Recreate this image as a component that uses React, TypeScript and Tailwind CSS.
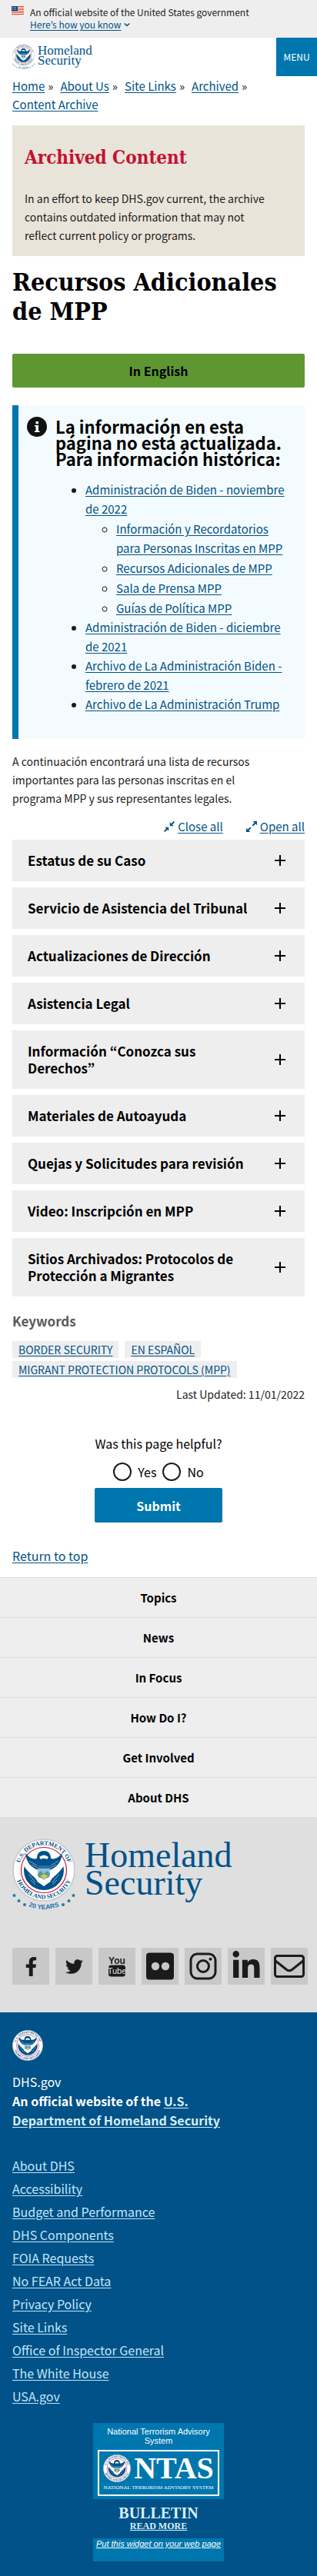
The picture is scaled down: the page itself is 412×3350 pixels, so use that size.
import React, { useId } from "react";
import { FaFacebookF, FaTwitter, FaLinkedinIn } from "react-icons/fa";

const LINK = "text-[#005288] underline underline-offset-2";

function Seal({ className, years = false }: { className: string; years?: boolean }) {
  const id = useId();
  return (
    <svg className={className} viewBox={years ? "0 0 82 98" : "0 0 82 82"} role="img" aria-label="U.S. Department of Homeland Security seal">
      <defs>
        <path id={id + "t"} d="M8.5 41 A32.5 32.5 0 0 1 73.5 41" />
        <path id={id + "b"} d="M3.5 41 A37.5 37.5 0 0 0 78.5 41" />
        <path id={id + "y"} d="M-10 41 A51 51 0 0 0 92 41" />
      </defs>
      <circle cx="41" cy="41" r="40" fill="#fff" stroke="#c4c8d0" strokeWidth="1.6" />
      <g fill="#005288" fontFamily="Liberation Serif, serif" fontWeight="700" fontSize="7.8" textAnchor="middle">
        <text>
          <textPath href={"#" + id + "t"} startOffset="50%">U.S. DEPARTMENT OF</textPath>
        </text>
        <text>
          <textPath href={"#" + id + "b"} startOffset="50%">HOMELAND SECURITY</textPath>
        </text>
      </g>
      <circle cx="41" cy="41" r="29.5" fill="#fff" stroke="#c41230" strokeWidth="1.2" />
      <path d="M15.5 36 C21 45 29 49 34 57 L41 62 L48 57 C53 49 61 45 66.500 36 A26 26 0 1 1 15.500 36Z" fill="#005288" />
      <path d="M17 19 C18 31 25 38 34 41 L34 46 L48 46 L48 41 C57 38 64 31 65 19 C60 25 54 28 50 25.500 C50 19 46 16 41 16 C36 16 32 19 32 25.500 C28 28 22 25 17 19Z" fill="#005288" />
      <path d="M35 24 Q41 19 47 24 L45 27 Q41 24.500 37 27 Z" fill="#fff" />
      <path d="M22 29 L32 35 M25 34 L33 38 M60 29 L50 35 M57 34 L49 38" stroke="#7fa8c6" strokeWidth="1" />
      <path d="M33 35 H49 V46 Q49 53 41 57 Q33 53 33 46Z" fill="#8fc0e0" />
      <path d="M33 35 H49 V39 H33Z" fill="#2b6ea3" />
      <path d="M33 46 L37 42 L41 46 L45 42 L49 46 Q48 50 46 51 H36 Q33 50 33 46Z" fill="#5b9a8c" />
      <path d="M36 49 L41 46 L47 49 L41 52Z" fill="#d9c25f" />
      <path d="M31 50 Q36 50 41 54 Q46 50 51 50 L49 57 L45 56 L41 60 L37 56 L33 57Z" fill="#fff" />
      <path d="M21 46 L30 57 M61 46 L52 57 M24 54 L30 60 M58 54 L52 60" stroke="#7fa8c6" strokeWidth="1" />
      {years && (
        <g>
          <g fill="#1f7f9c">
            <circle cx="2.500" cy="74" r="2" />
            <circle cx="8.500" cy="81" r="2" />
            <circle cx="16" cy="86" r="2" />
            <circle cx="66" cy="86" r="2" />
            <circle cx="73.500" cy="81" r="2" />
            <circle cx="79.500" cy="74" r="2" />
          </g>
          <text fill="#1f6fae" fontFamily="Liberation Sans, sans-serif" fontWeight="700" fontSize="8.5" textAnchor="middle">
            <textPath href={"#" + id + "y"} startOffset="50%">20 YEARS</textPath>
          </text>
        </g>
      )}
    </svg>
  );
}

function Banner() {
  return (
    <div className="flex items-start gap-2 bg-[#eeeeee] pt-2 pr-4 pb-[9px] pl-[15px]">
      <svg className="h-[11px] w-4 shrink-0" viewBox="0 0 16 11" aria-hidden="true">
        <rect width="16" height="11" fill="#fff" />
        <path d="M0 .5H16M0 2.500H16M0 4.500H16M0 6.500H16M0 8.500H16M0 10.500H16" stroke="#db3e1f" />
        <rect width="8" height="6" fill="#0b3d8c" />
        <path d="M1 1.500H7M1 3H7M1 4.500H7" stroke="#fff" strokeWidth=".7" strokeDasharray="1 1" />
      </svg>
      <div className="text-[12px] leading-4">
        <p>An official website of the United States government</p>
        <button type="button" className="flex items-center gap-1 text-[#005288]">
          <span className="underline underline-offset-2">Here’s how you know</span>
          <svg className="h-2 w-2" viewBox="0 0 8 8" fill="none" stroke="currentColor" strokeWidth="1.6" aria-hidden="true">
            <path d="M.8 2.500 4 5.500 7.200 2.500" />
          </svg>
        </button>
      </div>
    </div>
  );
}

function Header() {
  return (
    <header className="flex h-[50px] items-stretch justify-between pl-4">
      <a href="#home" className="flex items-start gap-1 pt-2 font-['Liberation_Serif',serif] text-[17px] leading-[13px] text-[#005288]">
        <Seal years className="h-[35px] w-[29px]" />
        <span className="pt-[2px]">
          Homeland
          <br />
          Security
        </span>
      </a>
      <button type="button" className="w-[53px] bg-[#0076ae] text-[12px] text-white">
        MENU
      </button>
    </header>
  );
}

const crumbs = ["Home", "About Us", "Site Links", "Archived", "Content Archive"];

function Breadcrumb() {
  return (
    <nav aria-label="Breadcrumb" className="px-4 pt-px text-[15px] leading-6">
      <ol className="flex flex-wrap gap-x-[9px]">
        {crumbs.map((c, i) => (
          <li key={c} className="flex gap-1">
            <a href="#crumb" className={LINK}>
              {c}
            </a>
            {i < crumbs.length - 1 && <span>»</span>}
          </li>
        ))}
      </ol>
    </nav>
  );
}

const biden2022 = [
  "Información y Recordatorios para Personas Inscritas en MPP",
  "Recursos Adicionales de MPP",
  "Sala de Prensa MPP",
  "Guías de Política MPP",
];
const archives = [
  "Administración de Biden - diciembre de 2021",
  "Archivo de La Administración Biden - febrero de 2021",
  "Archivo de La Administración Trump",
];

function ArchiveNotice() {
  return (
    <section className="mt-[23px] flex gap-[11px] border-l-8 border-[#0076ae] bg-[#f4fbfe] pt-[15px] pr-4 pb-[33px] pl-[11px]">
      <svg className="h-[26px] w-[26px] shrink-0" viewBox="0 0 26 26" aria-hidden="true">
        <circle cx="13" cy="13" r="13" fill="#111" />
        <path d="M11.500 6h3.500v3.300h-3.500zM10 11h5v7.500h1.500V20H10v-1.500h1.500v-6H10z" fill="#fff" />
      </svg>
      <div>
        <h3 className="pt-[2px] text-[22px] leading-[21px] font-bold text-black">La información en esta página no está actualizada. Para información histórica:</h3>
        <ul className="mt-[17px] list-disc pl-[39px] text-[15px] leading-[25px]">
          <li>
            <a href="#nov-2022" className={LINK}>
              Administración de Biden - noviembre de 2022
            </a>
            <ul className="mt-px list-[circle] space-y-px pl-10">
              {biden2022.map((t) => (
                <li key={t}>
                  <a href="#mpp" className={LINK}>
                    {t}
                  </a>
                </li>
              ))}
            </ul>
          </li>
          {archives.map((t) => (
            <li key={t}>
              <a href="#archive" className={LINK}>
                {t}
              </a>
            </li>
          ))}
        </ul>
      </div>
    </section>
  );
}

const sections = [
  "Estatus de su Caso",
  "Servicio de Asistencia del Tribunal",
  "Actualizaciones de Dirección",
  "Asistencia Legal",
  "Información “Conozca sus Derechos”",
  "Materiales de Autoayuda",
  "Quejas y Solicitudes para revisión",
  "Video: Inscripción en MPP",
  "Sitios Archivados: Protocolos de Protección a Migrantes",
];

function Accordion() {
  return (
    <>
      <div className="mt-[13px] flex justify-end gap-[30px] text-[15px] leading-6 text-[#005288]">
        <button type="button" className="flex items-center gap-1">
          <svg className="h-[14px] w-[14px]" viewBox="0 0 14 14" fill="currentColor" aria-hidden="true">
            <path d="M7.800 1.300v5h5l-1.900-1.900L14 1.300 12.700 0 9.600 3.100zM6.200 12.700v-5h-5l1.900 1.900L0 12.700 1.300 14l3.100-3.100z" />
          </svg>
          <span className="underline underline-offset-2">Close all</span>
        </button>
        <button type="button" className="flex items-center gap-1">
          <svg className="h-[14px] w-[14px]" viewBox="0 0 14 14" fill="currentColor" aria-hidden="true">
            <path d="M14 0v5.200l-1.900-1.900-3.100 3.100L7.600 5l3.100-3.100L8.800 0zM0 14V8.800l1.900 1.900L5 7.600 6.400 9l-3.100 3.100L5.200 14z" />
          </svg>
          <span className="underline underline-offset-2">Open all</span>
        </button>
      </div>
      <div className="mt-[5px] flex flex-col gap-2">
        {sections.map((s) => (
          <h4 key={s}>
            <button type="button" aria-expanded="false" className="flex w-full items-center justify-between gap-5 bg-[#eeeeee] py-4 pr-[25px] pl-5 text-left text-[17px] leading-[22px] font-bold text-black">
              <span>{s}</span>
              <svg className="h-[14px] w-[14px] shrink-0" viewBox="0 0 14 14" stroke="currentColor" strokeWidth="2" aria-hidden="true">
                <path d="M7 0V14M0 7H14" />
              </svg>
            </button>
          </h4>
        ))}
      </div>
    </>
  );
}

const keywords = ["BORDER SECURITY", "EN ESPAÑOL", "MIGRANT PROTECTION PROTOCOLS (MPP)"];

function Feedback() {
  return (
    <form className="mt-10 flex flex-col items-center text-[16px] leading-6 text-black" onSubmit={(e) => e.preventDefault()}>
      <p>Was this page helpful?</p>
      <div className="mt-[13px] flex gap-2">
        {["Yes", "No"].map((o) => (
          <label key={o} className="flex items-center gap-2">
            <input type="radio" name="helpful" className="h-6 w-6 appearance-none rounded-full border-2 border-[#1b1b1b] bg-white checked:bg-[#0076ae]" />
            {o}
          </label>
        ))}
      </div>
      <button type="submit" className="mt-[9px] h-[45px] w-[166px] rounded-xs bg-[#0076ae] font-bold text-white">
        Submit
      </button>
    </form>
  );
}

const navItems = ["Topics", "News", "In Focus", "How Do I?", "Get Involved", "About DHS"];

function Social() {
  const tile = "flex h-12 w-12 items-center justify-center bg-[#c8c8c8] text-[#1b1b1b]";
  return (
    <div className="mt-11 -mr-1 flex justify-between">
      <a href="#facebook" aria-label="Facebook" className={tile}>
        <FaFacebookF size={25} />
      </a>
      <a href="#twitter" aria-label="Twitter" className={tile}>
        <FaTwitter size={23} />
      </a>
      <a href="#youtube" aria-label="YouTube" className={tile}>
        <svg className="h-7 w-6" viewBox="0 0 24 28" fontFamily="Liberation Sans Narrow, Liberation Sans, sans-serif" textAnchor="middle" aria-hidden="true">
          <text x="12" y="10.500" fontSize="12" fontWeight="700" fill="currentColor">
            You
          </text>
          <rect x="1" y="12.500" width="22" height="15" rx="3.500" fill="currentColor" />
          <text x="12" y="24" fontSize="11" fill="#e4e4e4">
            Tube
          </text>
        </svg>
      </a>
      <a href="#flickr" aria-label="Flickr" className={tile}>
        <svg className="h-9 w-9" viewBox="0 0 36 36" aria-hidden="true">
          <rect y=".5" width="36" height="35" rx="4" fill="currentColor" />
          <circle cx="12" cy="18" r="5.200" fill="#c8c8c8" />
          <circle cx="25" cy="18" r="5.200" fill="#c8c8c8" />
        </svg>
      </a>
      <a href="#instagram" aria-label="Instagram" className={tile}>
        <svg className="h-9 w-9" viewBox="0 0 36 36" fill="none" stroke="currentColor" strokeWidth="3" aria-hidden="true">
          <rect x="2" y="2" width="32" height="32" rx="8.500" />
          <circle cx="18" cy="18" r="7.500" />
          <circle cx="27.500" cy="8.800" r="2" fill="currentColor" stroke="none" />
        </svg>
      </a>
      <a href="#linkedin" aria-label="LinkedIn" className={tile}>
        <FaLinkedinIn size={40} />
      </a>
      <a href="#email" aria-label="Email" className={tile}>
        <svg className="h-[30px] w-10" viewBox="0 0 40 30" fill="none" stroke="currentColor" strokeWidth="3" aria-hidden="true">
          <rect x="1.500" y="1.500" width="37" height="27" rx="3" />
          <path d="M2 8 L16.500 19.500 Q20 22 23.500 19.500 L38 8" />
        </svg>
      </a>
    </div>
  );
}

const footerLinks = [
  "About DHS",
  "Accessibility",
  "Budget and Performance",
  "DHS Components",
  "FOIA Requests",
  "No FEAR Act Data",
  "Privacy Policy",
  "Site Links",
  "Office of Inspector General",
  "The White House",
  "USA.gov",
];

function Ntas() {
  return (
    <aside className="mx-auto mt-5 w-[170px] text-center font-['Liberation_Sans',sans-serif] text-[11px] leading-3 text-white">
      <div className="bg-[#0076ae] px-[6px] pt-[5px] pb-1">
        <p>National Terrorism Advisory System</p>
        <a href="#ntas" className="mt-[6px] flex flex-col items-center border-2 border-white pt-1 pb-[3px] font-['Liberation_Serif',serif]">
          <span className="flex items-center gap-1">
            <Seal className="h-9 w-9" />
            <span className="text-[40px] leading-9 font-bold">NTAS</span>
          </span>
          <span className="mt-[2px] text-[7px] leading-[11px] whitespace-nowrap">NATIONAL TERRORISM ADVISORY SYSTEM</span>
        </a>
      </div>
      <div className="pt-2 pb-2 font-['Liberation_Serif',serif] font-bold text-[#d9f1fb]">
        <p className="text-[20px] leading-5">BULLETIN</p>
        <a href="#bulletin" className="block text-[12px] leading-[15px] underline">
          READ MORE
        </a>
      </div>
      <div className="bg-[#0076ae] pt-px pb-[17px]">
        <a href="#widget" className="whitespace-nowrap italic underline">
          Put this widget on your web page
        </a>
      </div>
    </aside>
  );
}

export default function App() {
  return (
    <div className="bg-white font-['Noto_Sans_CJK_KR',sans-serif] text-[#1b1b1b]">
      <Banner />
      <Header />
      <main>
        <Breadcrumb />
        <div className="px-4 pt-[15px] text-[14px] leading-6">
          <section className="bg-[#e9e4d9] px-4 pt-7 pb-[15px]">
            <h2 className="font-['DejaVu_Serif_Condensed','DejaVu_Serif',serif] text-[24px] leading-7 font-bold text-[#c41230]">Archived Content</h2>
            <p className="mt-[27px]">In an effort to keep DHS.gov current, the archive contains outdated information that may not reflect{"\u00a0"}current policy or programs.</p>
          </section>
          <h1 className="mt-[15px] font-['DejaVu_Serif_Condensed','DejaVu_Serif',serif] text-[32px] leading-[38px] font-bold text-black">Recursos Adicionales de MPP</h1>
          <a href="#english" className="mt-9 flex h-11 items-center justify-center rounded-xs bg-[#5e9732] text-[16px] font-bold text-black">
            In English
          </a>
          <ArchiveNotice />
          <p className="mt-[17px]">A continuación encontrará una lista de recursos importantes para las personas inscritas en el programa{"\u00a0"}MPP y sus representantes legales.</p>
          <Accordion />
          <h3 className="mt-5 text-[17px] font-bold text-[#5a5a5a]">Keywords</h3>
          <ul className="mt-[14px] flex flex-wrap gap-x-2 gap-y-1 leading-[22px]">
            {keywords.map((k) => (
              <li key={k} className="bg-[#eeeeee] px-2">
                <a href="#keyword" className={LINK}>
                  {k}
                </a>
              </li>
            ))}
          </ul>
          <p className="mt-[9px] text-right">Last Updated: 11/01/2022</p>
          <Feedback />
          <a href="#top" className={"mt-[31px] mb-4 block text-[16px] " + LINK}>
            Return to top
          </a>
        </div>
      </main>
      <nav aria-label="Footer" className="bg-[#eeeeee]">
        {navItems.map((n) => (
          <a key={n} href="#nav" className="block border-t border-[#dddddd] py-[13px] text-center text-[15px] leading-[25px] font-bold text-black">
            {n}
          </a>
        ))}
      </nav>
      <div className="bg-[#dfdfdf] px-4 pt-7 pb-9">
        <a href="#home" className="flex items-start gap-3 font-['Liberation_Serif',serif] text-[46px] leading-9 text-[#005288]">
          <Seal years className="h-[98px] w-[82px]" />
          <span className="pt-1">
            Homeland
            <br />
            Security
          </span>
        </a>
        <Social />
      </div>
      <footer className="bg-[#005288] px-4 pt-[23px] pb-[19px] text-[16px] leading-[25px] text-white">
        <Seal className="h-10 w-10" />
        <p className="mt-[15px]">DHS.gov</p>
        <p className="max-w-[300px] font-bold">
          An official website of the{" "}
          <a href="#dhs" className="text-[#d6eefb] underline underline-offset-2">
            U.S. Department of Homeland Security
          </a>
        </p>
        <ul className="mt-[31px] leading-[30px] text-[#c3e6f7]">
          {footerLinks.map((l) => (
            <li key={l}>
              <a href="#footer" className="underline underline-offset-2">
                {l}
              </a>
            </li>
          ))}
        </ul>
        <Ntas />
      </footer>
    </div>
  );
}
